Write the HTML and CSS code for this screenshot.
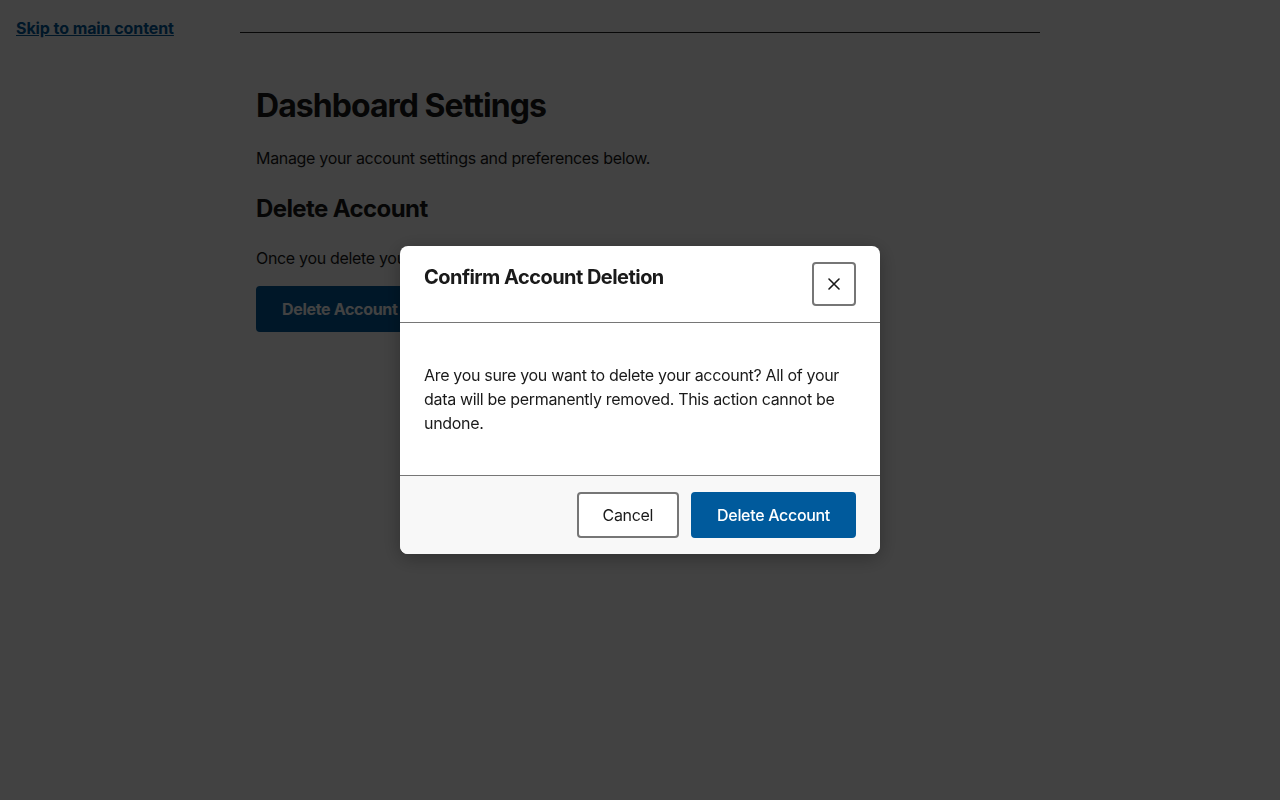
FILE: index.html
```html
<!DOCTYPE html>
<html lang="en">
<head>
<meta charset="utf-8">
<title>Dashboard Settings</title>
<link rel="stylesheet" href="styles.css">
</head>
<body>
<a class="skip-link" href="#main">Skip to main content</a>
<header class="site-header"></header>
<main id="main" class="main">
  <h1 class="page-title">Dashboard Settings</h1>
  <p class="text">Manage your account settings and preferences below.</p>
  <h2 class="section-title">Delete Account</h2>
  <p class="text">Once you delete your account, there is no going back. Please be certain.</p>
  <button class="btn btn-danger btn-bold" type="button">Delete Account</button>
</main>
<div class="overlay">
  <div class="modal" role="dialog" aria-modal="true" aria-labelledby="modal-title">
    <div class="modal-header">
      <h2 class="modal-title" id="modal-title">Confirm Account Deletion</h2>
      <button class="close-btn" type="button" aria-label="Close">
        <svg width="12" height="12" viewBox="0 0 12 12" aria-hidden="true"><path d="M1 1 L11 11 M11 1 L1 11" stroke="#1a1a1a" stroke-width="1.6" stroke-linecap="round" fill="none"/></svg>
      </button>
    </div>
    <div class="modal-body">
      <p class="modal-text">Are you sure you want to delete your account? All of your data will be permanently removed. This action cannot be undone.</p>
    </div>
    <div class="modal-footer">
      <button class="btn btn-secondary" type="button">Cancel</button>
      <button class="btn btn-danger" type="button">Delete Account</button>
    </div>
  </div>
</div>
</body>
</html>
```
FILE: styles.css
```css
* { box-sizing: border-box; }
html, body { margin: 0; padding: 0; }
body {
  font-family: Inter, "Noto Sans", "Liberation Sans", sans-serif;
  color: #1a1a1a;
  background: #ffffff;
  font-size: 16px;
  line-height: 1.5;
  letter-spacing: -0.02em;
}
.skip-link {
  position: absolute;
  left: 16px;
  top: 16px;
  font-weight: 700;
  font-size: 16px;
  letter-spacing: -0.005em;
  color: #005a9c;
  text-decoration: underline;
  line-height: 24px;
}
.site-header {
  max-width: 800px;
  margin: 0 auto;
  height: 33px;
  border-bottom: 1px solid #222;
}
.main {
  max-width: 800px;
  margin: 0 auto;
  padding: 53px 16px 16px;
}
.page-title {
  font-size: 32px;
  font-weight: 700;
  line-height: 40px;
  letter-spacing: -0.03em;
  margin: 0 0 20px;
}
.text {
  margin: 0 0 16px;
  line-height: 24px;
}
.section-title {
  font-size: 24px;
  font-weight: 700;
  line-height: 32px;
  letter-spacing: -0.025em;
  margin: 23px 0 21px;
}
.btn {
  font-family: inherit;
  font-size: 16px;
  line-height: 22px;
  letter-spacing: -0.02em;
  padding: 10px 24px;
  border-radius: 4px;
  border: 2px solid transparent;
  cursor: pointer;
}
.btn-danger {
  background: #005a9c;
  color: #ffffff;
  border-color: #005a9c;
  font-weight: 500;
}
.btn-danger.btn-bold { font-weight: 700; }
.btn-secondary {
  background: #ffffff;
  color: #1a1a1a;
  border-color: #767676;
}
.overlay {
  position: fixed;
  inset: 0;
  background: rgba(0, 0, 0, 0.74);
  display: flex;
  align-items: center;
  justify-content: center;
}
.modal {
  width: 480px;
  background: #ffffff;
  border-radius: 8px;
  overflow: hidden;
  box-shadow: 0 4px 20px rgba(0, 0, 0, 0.3);
}
.modal-header {
  display: flex;
  justify-content: space-between;
  align-items: flex-start;
  padding: 16px 24px;
  border-bottom: 1px solid #767676;
}
.modal-title {
  margin: 0;
  font-size: 20px;
  font-weight: 700;
  line-height: 30px;
  letter-spacing: -0.027em;
}
.close-btn {
  width: 44px;
  height: 44px;
  border: 2px solid #767676;
  border-radius: 4px;
  background: #ffffff;
  display: flex;
  align-items: center;
  justify-content: center;
  padding: 0;
  cursor: pointer;
}
.modal-body {
  padding: 24px;
}
.modal-text {
  margin: 16px 0;
  line-height: 24px;
  color: #1a1a1a;
}
.modal-footer {
  display: flex;
  justify-content: flex-end;
  gap: 12px;
  padding: 16px 24px;
  background: #f8f8f8;
  border-top: 1px solid #767676;
}
```
